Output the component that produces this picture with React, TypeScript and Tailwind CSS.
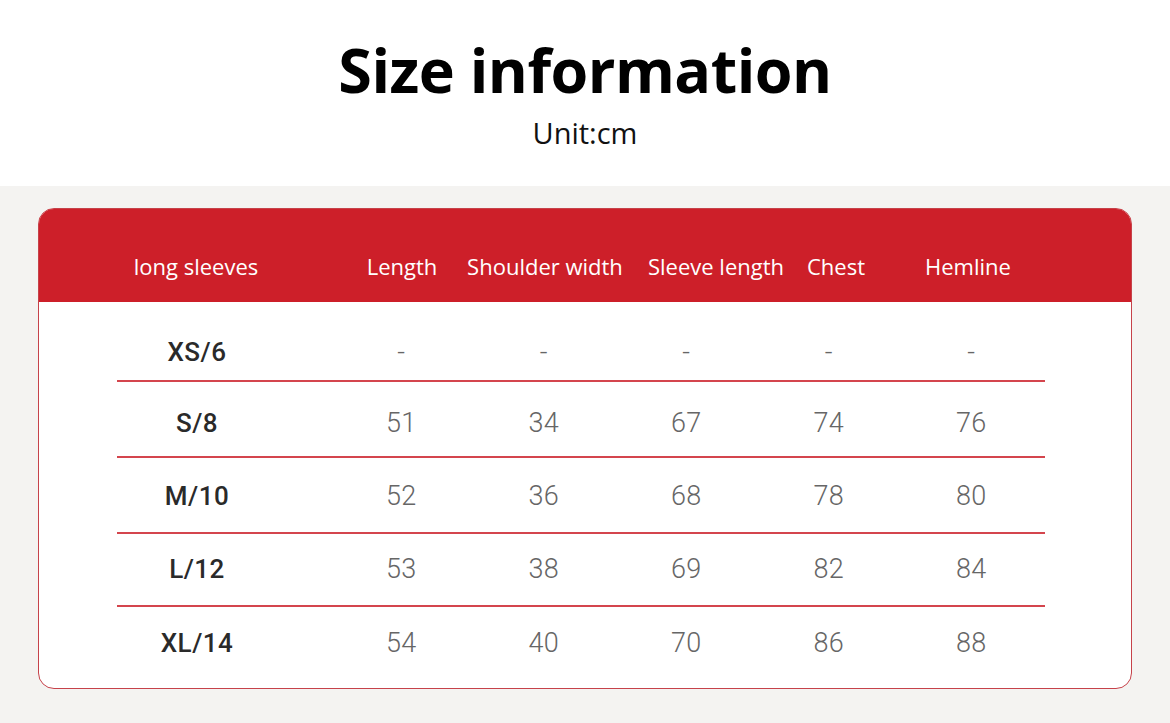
const headers = [
  { label: "long sleeves", w: "w-[316px]" },
  { label: "Length", w: "w-[96px]" },
  { label: "Shoulder width", w: "w-[190px]" },
  { label: "Sleeve length", w: "w-[152px]" },
  { label: "Chest", w: "w-[88px]" },
  { label: "Hemline", w: "w-[176px]" },
];

// row box heights / top padding tuned to the reference rule positions
const rows = [
  { size: "XS/6", values: ["-", "-", "-", "-", "-"], cls: "h-[80px] pt-[22px] border-b-2" },
  { size: "S/8", values: ["51", "34", "67", "74", "76"], cls: "h-[76px] pt-[8px] border-b-2" },
  { size: "M/10", values: ["52", "36", "68", "78", "80"], cls: "h-[76px] pt-[2px] border-b-2" },
  { size: "L/12", values: ["53", "38", "69", "82", "84"], cls: "h-[73px] pt-[0px] border-b-2" },
  { size: "XL/14", values: ["54", "40", "70", "86", "88"], cls: "h-[81px] pb-[8px]" },
];

export default function App() {
  return (
    <div className="w-[1170px] h-[723px] bg-[#f4f3f1] flex flex-col overflow-hidden">
      {/* Title */}
      <div className="h-[186px] bg-white flex flex-col items-center shrink-0 font-['Open_Sans',sans-serif]">
        <h1 className="mt-[31px] text-[61px] leading-[78px] font-bold text-black tracking-[-0.5px]">
          Size information
        </h1>
        <div className="mt-[7px] text-[29px] leading-[34px] text-[#111]">Unit:cm</div>
      </div>

      {/* Table card */}
      <div className="mt-[22px] mx-[38px] rounded-[16px] border border-[#c6424a] bg-white overflow-hidden">
        <div className="h-[94px] bg-[#cd1f29] flex pt-[43px] font-['Open_Sans',sans-serif] font-medium text-white text-[22px] leading-[30px] -mx-px -mt-px">
          {headers.map((h) => (
            <div key={h.label} className={`${h.w} shrink-0 text-center whitespace-nowrap`}>
              {h.label}
            </div>
          ))}
        </div>

        <div className="pl-[78px] font-['Roboto',sans-serif]">
          {rows.map((r) => (
            <div key={r.size} className={`w-[928px] flex items-center border-[#d4454d] ${r.cls}`}>
              <div className="w-[213px] pr-[53px] text-center text-[26px] font-medium text-[#2a2a2a] tracking-[0.5px]">
                {r.size}
              </div>
              {r.values.map((v, j) => (
                <div key={j} className="w-[142.5px] text-center text-[27px] font-light text-[#666] tracking-[0.3px]">
                  {v}
                </div>
              ))}
            </div>
          ))}
        </div>
      </div>
    </div>
  );
}
